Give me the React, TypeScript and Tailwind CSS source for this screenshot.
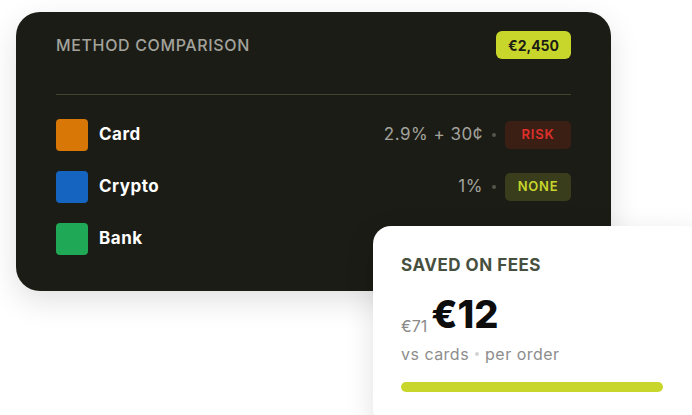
import React from "react";

const rows = [
  { name: "Card", color: "bg-[#d97706]", fee: "2.9% + 30¢", badge: "RISK", badgeCls: "bg-[#3b1f14] text-[#e0302c]" },
  { name: "Crypto", color: "bg-[#1565c0]", fee: "1%", badge: "NONE", badgeCls: "bg-[#3a3d1c] text-[#c8d62c]" },
  { name: "Bank", color: "bg-[#1fa855]", fee: "", badge: "", badgeCls: "" },
];

export default function App() {
  return (
    <div
      className="relative w-[692px] h-[415px] overflow-hidden bg-white"
      style={{ fontFamily: "Inter, 'Noto Sans', sans-serif" }}
    >
      <div className="ml-[16px] mt-[12px] w-[595px] h-[279px] rounded-[24px] bg-[#1c1c16] px-[40px] pt-[19px] shadow-[0_10px_30px_rgba(0,0,0,0.12)]">
        <div className="flex items-center justify-between h-[28px]">
          <span className="text-[16px] font-medium tracking-[0.04em] text-[#a3a39c]">METHOD COMPARISON</span>
          <span className="h-[28px] px-[12px] rounded-[6px] bg-[#c8d62c] text-[14px] font-bold text-[#1c1c16] flex items-center">
            €2,450
          </span>
        </div>
        <div className="mt-[35px] h-px bg-[#45452f]" />
        <div className="mt-[24px] flex flex-col gap-[20px]">
          {rows.map((r) => (
            <div key={r.name} className="flex items-center h-[32px]">
              <div className={`w-[32px] h-[32px] rounded-[4px] ${r.color}`} />
              <span className="ml-[11px] text-[17px] font-bold tracking-[0.03em] text-white">{r.name}</span>
              <div className="ml-auto flex items-center">
                {r.fee && <span className="text-[17px] tracking-[0.03em] text-[#a3a39c]">{r.fee}</span>}
                {r.fee && <span className="mx-[9px] w-[4px] h-[4px] rounded-full bg-[#55554c]" />}
                {r.badge && (
                  <span className={`w-[66px] h-[28px] rounded-[5px] flex items-center justify-center text-[13px] font-semibold tracking-[0.06em] ${r.badgeCls}`}>
                    {r.badge}
                  </span>
                )}
              </div>
            </div>
          ))}
        </div>
      </div>

      <div className="absolute left-[373px] top-[226px] w-[330px] h-[200px] rounded-[18px] bg-white shadow-[0_8px_30px_rgba(0,0,0,0.12)] px-[28px] pt-[27px]">
        <div className="text-[17px] font-bold tracking-[0.03em] text-[#474f3e]">SAVED ON FEES</div>
        <div className="mt-[12px] flex items-end gap-[4px] h-[44px]">
          <span className="text-[16px] text-[#8a8a8a] leading-none mb-[1px]">€71</span>
          <span className="text-[38px] font-extrabold text-[#0d0d0d] leading-none mb-[2px]">€12</span>
        </div>
        <div className="mt-[7px] flex items-center text-[16px] text-[#8c8c8c] tracking-[0.03em]">
          <span>vs cards</span>
          <span className="mx-[6px] w-[4px] h-[4px] rounded-full bg-[#d4d4d4]" />
          <span>per order</span>
        </div>
        <div className="mt-[16px] w-[262px] h-[10px] rounded-full bg-[#c8d62c]" />
      </div>
    </div>
  );
}
